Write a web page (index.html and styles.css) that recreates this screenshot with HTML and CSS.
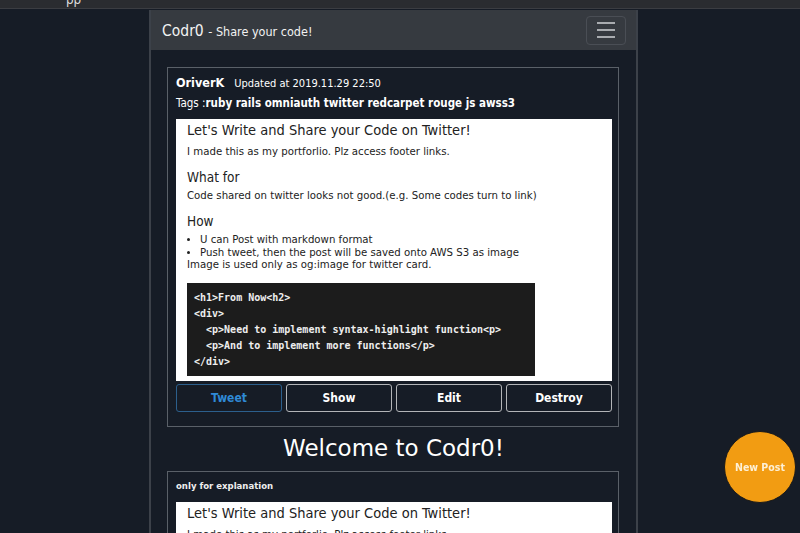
FILE: index.html
```html
<!DOCTYPE html>
<html>
<head>
<meta charset="utf-8">
<link rel="stylesheet" href="styles.css">
</head>
<body>
<div class="topbar"><span class="tab">pp</span></div>
<div class="container">
  <nav class="navbar">
    <div class="brand"><span class="brand-main">Codr0</span> <span class="brand-sub">- Share your code!</span></div>
    <button class="toggler"><span></span><span></span><span></span></button>
  </nav>
  <div class="card">
    <div class="meta"><span class="author">OriverK</span><span class="updated">Updated at 2019.11.29 22:50</span></div>
    <div class="tags"><span class="tags-label">Tags :</span>ruby rails omniauth twitter redcarpet rouge js awss3</div>
    <div class="doc">
      <h1>Let's Write and Share your Code on Twitter!</h1>
      <p>I made this as my portforlio. Plz access footer links.</p>
      <h2>What for</h2>
      <p>Code shared on twitter looks not good.(e.g. Some codes turn to link)</p>
      <h2>How</h2>
      <ul>
        <li>U can Post with markdown format</li>
        <li>Push tweet, then the post will be saved onto AWS S3 as image</li>
      </ul>
      <p class="after-list">Image is used only as og:image for twitter card.</p>
      <pre class="code">&lt;h1&gt;From Now&lt;h2&gt;
&lt;div&gt;
  &lt;p&gt;Need to implement syntax-highlight function&lt;p&gt;
  &lt;p&gt;And to implement more functions&lt;/p&gt;
&lt;/div&gt;</pre>
    </div>
    <div class="actions">
      <a class="btn btn-tweet">Tweet</a>
      <a class="btn">Show</a>
      <a class="btn">Edit</a>
      <a class="btn">Destroy</a>
    </div>
  </div>
  <h2 class="welcome">Welcome to Codr0!</h2>
  <div class="card card-next">
    <div class="meta small">only for explanation</div>
    <div class="doc">
      <h1>Let's Write and Share your Code on Twitter!</h1>
      <p>I made this as my portforlio. Plz access footer links.</p>
    </div>
  </div>
</div>
<a class="new-post">New Post</a>
</body>
</html>
```

FILE: styles.css
```css
html, body {
  margin: 0;
  padding: 0;
  background: #161c26;
  height: 533px;
  overflow: hidden;
  font-family: "DejaVu Sans", Verdana, sans-serif;
}
.topbar {
  height: 8px;
  background: #2a2c30;
  border-bottom: 1px solid #3b3d42;
  overflow: hidden;
  color: #ddd;
  font-size: 12px;
  line-height: 0px;
}
.tab { margin-left: 66px; }
.container {
  margin-left: 149px;
  width: 485px;
  min-height: 600px;
  border-left: 2px solid #3c4149;
  border-right: 2px solid #3c4149;
  background: #161c26;
}
.navbar {
  height: 40px;
  background: #363a40;
  display: flex;
  align-items: center;
  justify-content: space-between;
  padding: 0 10px 0 11px;
  margin-top: 1px;
}
.brand {
  color: #f2f2f2;
  font-family: "DejaVu Sans Condensed", "DejaVu Sans", sans-serif;
}
.brand-main { font-size: 15.5px; }
.brand-sub { font-size: 12.5px; }
.toggler {
  width: 40px;
  height: 29px;
  background: transparent;
  border: 1px solid #4a4e55;
  border-radius: 4px;
  display: flex;
  flex-direction: column;
  justify-content: center;
  align-items: center;
  gap: 5px;
  padding: 0;
}
.toggler span {
  display: block;
  width: 18px;
  height: 2px;
  background: #a9acb0;
}
.card {
  margin: 17px 17px 0 16px;
  border: 1px solid #5a6068;
  padding: 7px 6px 14px 8px;
}
.card-next { margin-top: 9px; }
.meta {
  color: #fff;
  font-family: "DejaVu Sans Condensed", "DejaVu Sans", sans-serif;
  font-size: 11px;
  display: flex;
  align-items: baseline;
  gap: 10px;
  height: 16px;
}
.meta.small {
  font-size: 9.5px;
  font-weight: bold;
  color: #eee;
  height: 14px;
  margin-bottom: 8px;
  margin-top: 1px;
}
.author { font-weight: bold; font-size: 12.5px; }
.tags {
  color: #fff;
  font-family: "DejaVu Sans Condensed", "DejaVu Sans", sans-serif;
  font-weight: bold;
  font-size: 11.5px;
  line-height: 14px;
  margin-top: 5px;
  margin-bottom: 9px;
}
.tags-label { font-weight: normal; }
.doc {
  background: #fff;
  color: #222;
  padding: 2px 11px 5px 11px;
}
.doc h1 {
  font-family: "DejaVu Sans Condensed", "DejaVu Sans", sans-serif;
  font-size: 14.5px;
  font-weight: normal;
  margin: 0 0 6px 0;
  line-height: 18px;
}
.doc h2 {
  font-family: "DejaVu Sans Condensed", "DejaVu Sans", sans-serif;
  font-size: 13.5px;
  font-weight: normal;
  margin: 10px 0 3px 0;
  line-height: 17px;
}
.doc p {
  font-size: 10.2px;
  margin: 0;
  line-height: 14px;
}
.doc ul {
  margin: 0;
  padding-left: 13px;
  font-size: 10.2px;
  line-height: 13px;
}
.doc p.after-list { margin-bottom: 12px; line-height: 12px; }
.code {
  width: 333px;
  background: #1c1c1c;
  color: #eee;
  font-family: "DejaVu Sans Mono", monospace;
  font-weight: bold;
  font-size: 10px;
  line-height: 16px;
  padding: 7px 8px 6px 7px;
  margin: 0;
}
.actions {
  display: flex;
  gap: 4px;
  margin-top: 3px;
}
.btn {
  flex: 1;
  height: 26px;
  border: 1px solid #b3b5b8;
  border-radius: 3px;
  color: #fff;
  font-family: "DejaVu Sans Condensed", "DejaVu Sans", sans-serif;
  font-weight: bold;
  font-size: 12px;
  display: flex;
  align-items: center;
  justify-content: center;
}
.btn-tweet {
  border-color: #2c5f8c;
  color: #2f8ad6;
}
.welcome {
  color: #fff;
  font-weight: normal;
  font-size: 23px;
  text-align: center;
  margin: 7px 0 0 0;
  line-height: 28px;
}
.new-post {
  position: fixed;
  left: 724px;
  top: 431px;
  width: 72px;
  height: 72px;
  border-radius: 50%;
  background: #f29c12;
  border: 1px solid #1a1a1a;
  box-sizing: border-box;
  color: #fdf0d6;
  font-family: "DejaVu Sans Condensed", "DejaVu Sans", sans-serif;
  font-weight: bold;
  font-size: 10.5px;
  display: flex;
  align-items: center;
  justify-content: center;
}
```
